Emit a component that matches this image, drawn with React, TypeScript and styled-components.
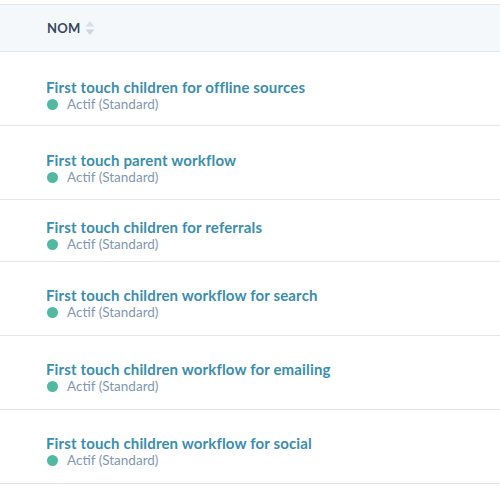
import styled, { createGlobalStyle } from "styled-components";

////////////////////////////////////////////////////////////////////////// Types

type Workflow = {
  name: string;
  status: string;
  top: number;
  height: number;
};

////////////////////////////////////////////////////////////////////////// Data

const workflows: Workflow[] = [
  { name: "First touch children for offline sources", status: "Actif (Standard)", top: 27, height: 73 },
  { name: "First touch parent workflow", status: "Actif (Standard)", top: 26, height: 73 },
  { name: "First touch children for referrals", status: "Actif (Standard)", top: 19, height: 61 },
  { name: "First touch children workflow for search", status: "Actif (Standard)", top: 25, height: 73 },
  { name: "First touch children workflow for emailing", status: "Actif (Standard)", top: 25, height: 73 },
  { name: "First touch children workflow for social", status: "Actif (Standard)", top: 25, height: 73 },
];

////////////////////////////////////////////////////////////////////////// Styles

const GlobalStyle = createGlobalStyle`
  html, body {
    margin: 0;
    padding: 0;
    background: #fff;
    font-family: Lato, "Open Sans", "Liberation Sans", sans-serif;
    -webkit-font-smoothing: antialiased;
  }
`;

const Table = styled.div`
  width: 500px;
  padding-top: 4px;
`;

const HeaderRow = styled.div`
  display: flex;
  align-items: center;
  gap: 5px;
  height: 46px;
  padding-left: 47px;
  background: #f5f8fa;
  border-top: 1px solid #dfe3eb;
  border-bottom: 1px solid #dfe3eb;
`;

const HeaderLabel = styled.span`
  font-size: 13px;
  font-weight: 700;
  letter-spacing: 0.2px;
  color: #33475b;
`;

const SortIcon = styled.svg`
  width: 10px;
  height: 15px;
  display: block;
`;

const Row = styled.div<{ $top: number; $height: number }>`
  display: flex;
  flex-direction: column;
  box-sizing: border-box;
  height: ${(p) => p.$height + 1}px;
  padding: ${(p) => p.$top}px 0 0 46px;
  border-bottom: 1px solid #e1e5ec;
`;

const Title = styled.a`
  font-size: 15px;
  font-weight: 700;
  line-height: 17px;
  color: #3a8ead;
  text-decoration: none;
  letter-spacing: 0.15px;
`;

const Status = styled.div`
  display: flex;
  align-items: center;
  gap: 9px;
  font-size: 13.5px;
  line-height: 16px;
  color: #8198b3;
  padding-left: 1px;
`;

const Dot = styled.span`
  width: 11px;
  height: 11px;
  border-radius: 50%;
  background: #51b9a1;
`;

////////////////////////////////////////////////////////////////////////// Component

const App = () => {
  return (
    <>
      <GlobalStyle />
      <Table>
        <HeaderRow>
          <HeaderLabel>NOM</HeaderLabel>
          <SortIcon viewBox="0 0 10 15">
            <path d="M5 0 L9.5 5.5 H0.5 Z" fill="#d8e0e8" />
            <path d="M5 14 L9.5 8.5 H0.5 Z" fill="#cbd6e2" />
          </SortIcon>
        </HeaderRow>
        {workflows.map((w) => (
          <Row key={w.name} $top={w.top} $height={w.height}>
            <Title href="#">{w.name}</Title>
            <Status>
              <Dot />
              {w.status}
            </Status>
          </Row>
        ))}
      </Table>
    </>
  );
};

export default App;
